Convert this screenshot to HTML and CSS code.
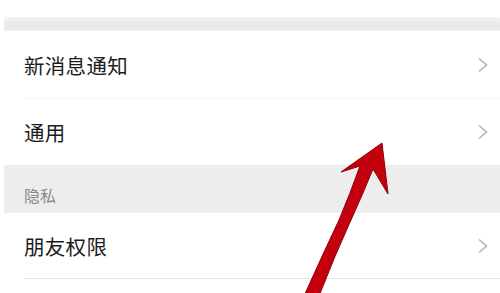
FILE: index.html
```html
<!DOCTYPE html>
<html lang="zh">
<head>
<meta charset="utf-8">
<link rel="stylesheet" href="styles.css">
</head>
<body>
<div class="page">
  <div class="top-blank"></div>
  <div class="top-band"></div>
  <div class="row row-tall">
    <div class="row-inner faint">
      <span class="label">新消息通知</span>
      <svg class="chev" viewBox="0 0 12 16"><path d="M2 1.5 L9.5 8 L2 14.5" fill="none" stroke="#b3b3b3" stroke-width="1.6"/></svg>
    </div>
  </div>
  <div class="row">
    <div class="row-inner">
      <span class="label">通用</span>
      <svg class="chev" viewBox="0 0 12 16"><path d="M2 1.5 L9.5 8 L2 14.5" fill="none" stroke="#b3b3b3" stroke-width="1.6"/></svg>
    </div>
  </div>
  <div class="section">隐私</div>
  <div class="row">
    <div class="row-inner line">
      <span class="label">朋友权限</span>
      <svg class="chev" viewBox="0 0 12 16"><path d="M2 1.5 L9.5 8 L2 14.5" fill="none" stroke="#b3b3b3" stroke-width="1.6"/></svg>
    </div>
  </div>
  <svg class="arrow" viewBox="0 0 500 293" width="500" height="293">
    <path d="M382 143 L388 194 L373 169 Q362 196 351 220 Q335 255 319 296 L304 296 Q322 256 339 220 Q350 194 360 166 L341 172 Z" fill="#c4000e" stroke="#8e0008" stroke-width="1" stroke-linejoin="miter"/>
  </svg>
</div>
</body>
</html>
```
FILE: styles.css
```css
* { box-sizing: border-box; }
html, body { margin: 0; padding: 0; background: #fff; }
body {
  font-family: "Noto Sans CJK SC", "Noto Sans", sans-serif;
  width: 500px;
  height: 293px;
  overflow: hidden;
}
.page {
  position: relative;
  width: 500px;
  height: 293px;
  display: flex;
  flex-direction: column;
}
.top-blank { height: 17px; }
.top-band {
  height: 14px;
  margin-left: 4px;
  background: linear-gradient(#f4f4f4, #e7e7e7 60%, #ececec);
}
.row {
  height: 66px;
  background: #fff;
  padding-left: 24px;
  display: flex;
}
.row-tall { height: 68px; }
.row-inner {
  flex: 1;
  display: flex;
  align-items: center;
  justify-content: space-between;
  padding-right: 11px;
}
.row-inner.faint { border-bottom: 1px solid #f6f6f6; }
.row-inner.line { border-bottom: 1px solid #e6e6e6; }
.label {
  font-size: 20.5px;
  color: #1c1c1c;
  letter-spacing: 0.3px;
}
.chev { width: 12px; height: 16px; display: block; }
.section {
  height: 48px;
  margin-left: 4px;
  background: #ededed;
  padding: 18px 0 0 20px;
  font-size: 16px;
  line-height: 24px;
  color: #8a8a8a;
}
.arrow {
  position: absolute;
  left: 0;
  top: 0;
  pointer-events: none;
}
```
